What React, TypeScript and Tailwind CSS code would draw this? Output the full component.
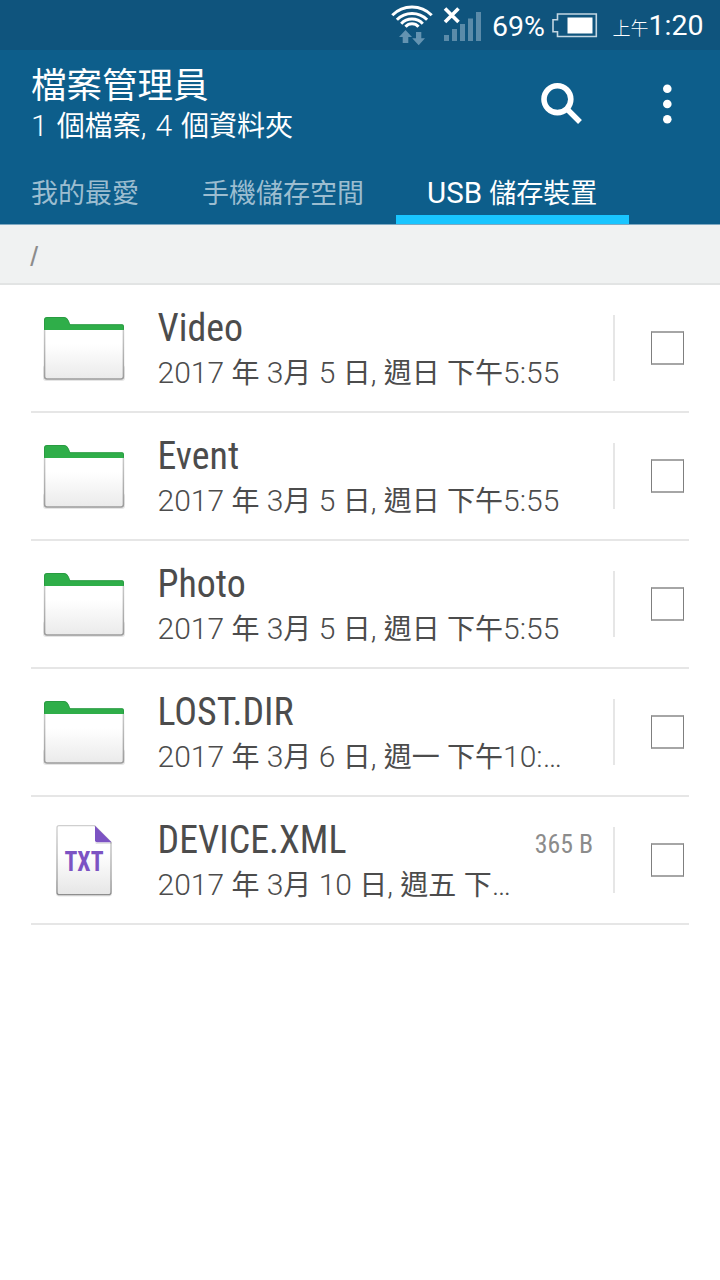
import React from "react";

type TextProps = { text: string; cjk: string; className?: string };

// Sets CJK runs in their own size and weight beside the Latin runs.
function Mixed({ text, cjk, className = "" }: TextProps) {
  const runs = text.split(/([\u3400-\u9fff]+)/).filter(Boolean);
  return (
    <span className={`block whitespace-pre ${className}`}>
      {runs.map((run, i) =>
        /[\u3400-\u9fff]/.test(run) ? (
          <span key={i} className={cjk}>
            {run}
          </span>
        ) : (
          run
        ),
      )}
    </span>
  );
}

type Entry = { name: string; date: string; size?: string; kind: "folder" | "txt" };

const entries: Entry[] = [
  { name: "Video", date: "2017 年 3月 5 日, 週日 下午5:55", kind: "folder" },
  { name: "Event", date: "2017 年 3月 5 日, 週日 下午5:55", kind: "folder" },
  { name: "Photo", date: "2017 年 3月 5 日, 週日 下午5:55", kind: "folder" },
  { name: "LOST.DIR", date: "2017 年 3月 6 日, 週一 下午10:…", kind: "folder" },
  { name: "DEVICE.XML", date: "2017 年 3月 10 日, 週五 下…", size: "365 B", kind: "txt" },
];

function WifiIcon() {
  return (
    <svg width="44" height="44" viewBox="0 0 44 44" className="shrink-0" fill="none">
      <g stroke="#fff" strokeWidth="3">
        <path d="M2.3 13.3A27.6 27.6 0 0 1 41.7 13.3" />
        <path d="M6.9 17.8A21.2 21.2 0 0 1 37.1 17.8" />
        <path d="M11.2 21.7A15 15 0 0 1 32.8 21.7" />
        <path d="M15.5 24.8A8.6 8.6 0 0 1 28.5 24.8" />
      </g>
      <path d="M15.500 28l6.500 7H18.300v6h-5.600v-6H9zM28.700 43.200l-6.500-7H26v-6.200h5.300V36.200h3.700z" fill="#6493b1" />
    </svg>
  );
}

function SignalIcon() {
  return (
    <svg width="40" height="38" viewBox="0 0 40 38" className="shrink-0" fill="#5b8ba9">
      <path d="M2 31h5v6H2zM10 25h5v12h-5zM18 20h5v17h-5zM26 14.500h5V37h-5zM34 8h5v29h-5z" />
      <path d="M3 4.500L16.500 18M16.500 4.500L3 18" stroke="#fff" strokeWidth="3.600" />
    </svg>
  );
}

function BatteryIcon() {
  return (
    <svg width="46" height="26" viewBox="0 0 46 26" className="shrink-0" fill="none">
      <path d="M5.500 1H44.300V23.500H5.500V18.700H1V6.800H5.500z" stroke="#c3d6e2" strokeWidth="1.600" />
      <path d="M15.500 4.500h25v16h-25z" fill="#fff" />
    </svg>
  );
}

function FolderIcon() {
  return (
    <svg width="88" height="70" viewBox="0 0 88 70" className="block">
      <defs>
        <linearGradient id="folderPaper" x1="0" y1="0" x2="0" y2="1">
          <stop offset="0.300" stopColor="#fff" />
          <stop offset="1" stopColor="#eaeaea" />
        </linearGradient>
        <linearGradient id="folderEdge" x1="0" y1="0" x2="0" y2="1">
          <stop offset="0" stopColor="#c8c8c8" />
          <stop offset="1" stopColor="#9c9c9c" />
        </linearGradient>
      </defs>
      <rect x="3" y="50" width="82" height="16" rx="3" fill="#000" opacity="0.1" />
      <path d="M4 14V61.500Q4 64.500 7 64.500H81Q84 64.500 84 61.500V14z" fill="url(#folderPaper)" />
      <path d="M4.600 15V61.500Q4.600 64 7 64H81Q83.400 64 83.400 61.500V15" fill="none" stroke="url(#folderEdge)" strokeWidth="1.500" />
      <path d="M4 15V5Q4 2 7 2H24Q27 2 28.500 5.500L30 9.200H82Q84 9.200 84 11.500V15z" fill="#2fae49" />
      <path d="M4.500 14.500V5Q4.500 2.500 7 2.500H24Q27 2.500 28.500 6L30 9.700H82Q83.500 9.700 83.500 11.500V14.500" fill="none" stroke="#23873a" strokeOpacity="0.500" />
    </svg>
  );
}

function TxtIcon() {
  return (
    <svg width="60" height="78" viewBox="0 0 60 78" className="block">
      <defs>
        <linearGradient id="sheet" x1="0" y1="0" x2="0" y2="1">
          <stop offset="0.400" stopColor="#fff" />
          <stop offset="1" stopColor="#e6e6e6" />
        </linearGradient>
        <linearGradient id="sheetEdge" x1="0" y1="0" x2="0" y2="1">
          <stop offset="0" stopColor="#cfcfcf" />
          <stop offset="1" stopColor="#8e8e8e" />
        </linearGradient>
      </defs>
      <rect x="2" y="56" width="56" height="17.500" rx="3" fill="#000" opacity="0.1" />
      <path d="M5 2.700H40.500L57 19.200V69.200Q57 71.700 54.500 71.700H5.500Q3 71.700 3 69.200V4.700Q3 2.700 5 2.700z" fill="url(#sheet)" stroke="url(#sheetEdge)" strokeWidth="1.300" />
      <path d="M41 19.500H57.500V20.700H42Z" fill="#000" opacity="0.150" />
      <path d="M41 2.700L57.500 19.200H43Q41 19.200 41 17.200z" fill="#7c53c3" />
      <text x="30" y="48" textAnchor="middle" textLength="39" lengthAdjust="spacingAndGlyphs" fill="#7c53c3" fontFamily="Roboto Condensed, Roboto, sans-serif" fontWeight="700" fontSize="27">
        TXT
      </text>
    </svg>
  );
}

function Row({ entry }: { entry: Entry }) {
  return (
    <li className="mx-[31px] flex h-32 w-[658px] items-start border-b-2 border-[#e6e6e6]">
      <div className="flex h-[129px] w-[106px] shrink-0 items-center justify-center">
        {entry.kind === "folder" ? <FolderIcon /> : <TxtIcon />}
      </div>
      <div className="w-[456px] shrink-0 pt-[21px] pl-[20.500px]">
        <div className="flex h-[45px] items-start justify-between">
          <span className="text-[37.900px] leading-[44px] text-[#4c4c4c] [font-family:'Roboto_Condensed',Roboto,sans-serif] [font-stretch:75%]">
            {entry.name}
          </span>
          {entry.size && (
            <span className="pt-2 text-[25.800px] leading-9 text-[#8c8c8c] [font-family:'Roboto_Condensed',Roboto,sans-serif] [font-stretch:75%]">
              {entry.size}
            </span>
          )}
        </div>
        <Mixed
          text={entry.date}
          cjk="text-[28px] font-normal"
          className="h-11 text-[30px] leading-[44px] font-light text-[#4c4c4c]"
        />
      </div>
      <div className="mt-[30px] ml-5 h-[66px] w-0.5 shrink-0 bg-[#e6e6e6]" />
      <div className="mt-[46px] ml-[36px] h-[34px] w-[33px] shrink-0 border-x border-y-2 border-x-[#7f7f7f] border-y-[#a6a6a6]" />
    </li>
  );
}

export default function App() {
  return (
    <div className="flex h-[1280px] w-[720px] flex-col overflow-hidden bg-white [font-family:Roboto,'Noto_Sans_CJK_TC',sans-serif]">
      <div className="flex h-[50px] shrink-0 items-start bg-[#0f547d] pl-[390px] text-white">
        <div className="pt-0.5">
          <WifiIcon />
        </div>
        <div className="ml-2 pt-1">
          <SignalIcon />
        </div>
        <span className="ml-2.5 w-[60px] pt-[5px] text-[28.500px] leading-[44px] whitespace-nowrap">69%</span>
        <div className="mt-[13px] -ml-[0.500px]">
          <BatteryIcon />
        </div>
        <Mixed text="上午1:20" cjk="text-[18px] font-light" className="ml-[15px] pt-[5px] text-[28.500px] leading-[42px]" />
      </div>

      <header className="flex h-[174px] shrink-0 flex-col bg-[#0d5e8b] text-white">
        <div className="flex h-[109px] items-start">
          <div className="w-[500px] pt-3.5 pl-[31px]">
            <h1 className="h-[42px] text-[35.500px] leading-[44px]">檔案管理員</h1>
            <Mixed text="1 個檔案, 4 個資料夾" cjk="text-[28px] font-normal" className="h-10 text-[30px] leading-10 font-light [word-spacing:1.7px]" />
          </div>
          <svg width="44" height="44" viewBox="0 0 44 44" fill="none" stroke="#fff" className="mt-8 ml-10">
            <circle cx="17.400" cy="17.200" r="13.400" strokeWidth="5.600" />
            <path d="M27 27L40 40" strokeWidth="5.400" />
          </svg>
          <svg width="12" height="44" viewBox="0 0 12 44" fill="#fff" className="mt-8 ml-[77px]">
            <circle cx="6.300" cy="6.700" r="4.300" />
            <circle cx="6.300" cy="22" r="4.300" />
            <circle cx="6.300" cy="37.300" r="4.300" />
          </svg>
        </div>
        <nav className="flex h-[65px] text-[27px] leading-[70px] text-[#9cbdd0]">
          <span className="w-[170px] pl-[31px]">我的最愛</span>
          <span className="w-[226px] pl-8">手機儲存空間</span>
          <div className="flex h-[65px] w-[233px] flex-col border-b-[9px] border-[#19c5ff] text-white">
            <Mixed text="USB 儲存裝置" cjk="text-[27px]" className="h-14 pl-[31px] text-[29.500px] leading-[68px]" />
          </div>
        </nav>
      </header>

      <div className="h-[61px] shrink-0 border-t border-b-2 border-t-[#7fa9c2] border-b-[#e2e4e4] bg-[#f0f2f2] pl-[30px] text-[25px] leading-[64px] font-medium text-[#8c8c8c] [font-family:'Roboto_Condensed',Roboto,sans-serif]">
        /
      </div>

      <ul className="flex flex-col">
        {entries.map((entry) => (
          <Row key={entry.name} entry={entry} />
        ))}
      </ul>
    </div>
  );
}
